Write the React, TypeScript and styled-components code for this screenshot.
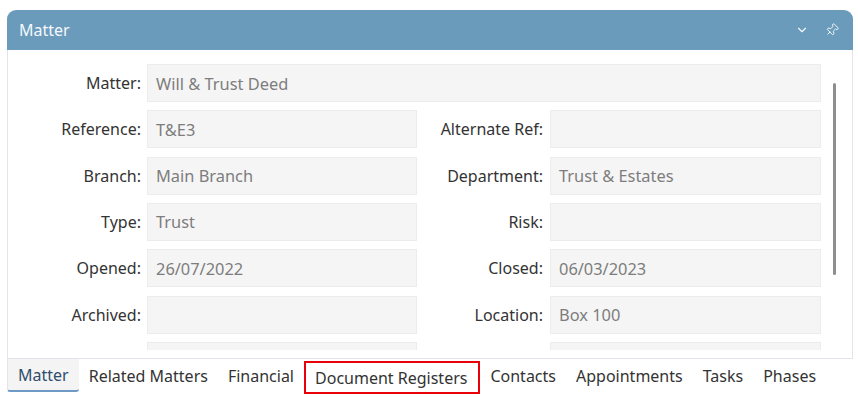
import styled, { createGlobalStyle } from "styled-components";
import { ChevronDown, Pin } from "lucide-react";

const GlobalStyle = createGlobalStyle`
    body {
        margin: 0;
        background: #ffffff;
        font-family: "Noto Sans", "Open Sans", sans-serif;
    }
`

const Page = styled.div`
    width: 858px;
    height: 397px;
    padding: 10px 5px 0 7px;
    box-sizing: border-box;
    overflow: hidden;
`

const Panel = styled.div`
    display: flex;
    flex-direction: column;
    width: 846px;
`

const Header = styled.div`
    height: 40px;
    display: flex;
    align-items: center;
    padding: 0 14px 0 12px;
    background: #6a9bbb;
    border-radius: 9px 9px 0 0;
    color: #f4f8fb;

    h1 {
        flex: 1;
        margin: 0;
        font-size: 16px;
        font-weight: 400;
    }
`

const HeaderIcons = styled.div`
    display: flex;
    align-items: center;
    gap: 16px;

    .pin {
        transform: rotate(45deg);
    }
`

const Body = styled.div`
    position: relative;
    height: 300px;
    border: 1px solid #e3e3e9;
    border-top: none;
    padding-bottom: 8px;
`

const Scroller = styled.div`
    height: 300px;
    overflow: hidden;
    padding-top: 14px;
    box-sizing: border-box;
`

const Form = styled.div`
    display: grid;
    grid-template-columns: 139px 270px 133px 271px;
    grid-auto-rows: 38px;
    row-gap: 8.33px;
`

const Label = styled.div<{ $gap?: number }>`
    display: flex;
    align-items: center;
    justify-content: flex-end;
    padding-right: ${p => p.$gap ?? 6}px;
    font-size: 16px;
    color: #333333;
    white-space: nowrap;
`

const Field = styled.div<{ $span?: number }>`
    grid-column: span ${p => p.$span ?? 1};
    display: flex;
    align-items: center;
    padding-left: 8px;
    background: #f5f5f5;
    border: 1px solid #ececec;
    box-sizing: border-box;
    font-size: 16.4px;
    color: #7d7d7d;
    white-space: nowrap;
`

const ScrollThumb = styled.div`
    position: absolute;
    left: 825px;
    top: 33px;
    width: 3px;
    height: 192px;
    border-radius: 2px;
    background: #8e8e8e;
`

const TabStrip = styled.div`
    display: flex;
    align-items: flex-start;
    height: 38px;
`

const Tab = styled.div<{ $active?: boolean; $marked?: boolean }>`
    height: 33px;
    display: flex;
    align-items: center;
    box-sizing: border-box;
    padding: ${p => (p.$marked ? "0 11px 0 9px" : "0 10px")};
    margin-top: ${p => (p.$marked ? "2px" : "0")};
    font-size: 16px;
    color: ${p => (p.$active ? "#2f4d6c" : "#333333")};
    white-space: nowrap;
    background: ${p => (p.$active ? "#f4f4f4" : "transparent")};
    border: ${p => (p.$marked ? "2px solid #e8000b" : "none")};
    border-left: ${p => (p.$active ? "1px solid #e3e3e9" : undefined)};
    border-bottom: ${p => (p.$active ? "2px solid #6d9bc6" : undefined)};
    border-radius: ${p => (p.$active ? "0 0 3px 3px" : "0")};
`

const rows: [string, string, string, string][] = [
    ["Reference:", "T&E3", "Alternate Ref:", ""],
    ["Branch:", "Main Branch", "Department:", "Trust & Estates"],
    ["Type:", "Trust", "Risk:", ""],
    ["Opened:", "26/07/2022", "Closed:", "06/03/2023"],
    ["Archived:", "", "Location:", "Box 100"],
    ["", "", "", ""],
]

const tabs = ["Matter", "Related Matters", "Financial", "Document Registers", "Contacts", "Appointments", "Tasks", "Phases"]

export default function App() {
    return (
        <Page>
            <GlobalStyle />
            <Panel>
                <Header>
                    <h1>Matter</h1>
                    <HeaderIcons>
                        <ChevronDown size={14} strokeWidth={2} />
                        <Pin size={14} strokeWidth={1.6} className="pin" />
                    </HeaderIcons>
                </Header>
                <Body>
                    <Scroller>
                        <Form>
                            <Label>Matter:</Label>
                            <Field $span={3}>Will &amp; Trust Deed</Field>
                            {rows.map((r, i) => [
                                <Label key={`l${i}`}>{r[0]}</Label>,
                                <Field key={`f${i}`}>{r[1]}</Field>,
                                <Label key={`m${i}`} $gap={7}>{r[2]}</Label>,
                                <Field key={`g${i}`}>{r[3]}</Field>,
                            ])}
                        </Form>
                    </Scroller>
                    <ScrollThumb />
                </Body>
                <TabStrip>
                    {tabs.map(t => (
                        <Tab key={t} $active={t === "Matter"} $marked={t === "Document Registers"}>{t}</Tab>
                    ))}
                </TabStrip>
            </Panel>
        </Page>
    )
}
